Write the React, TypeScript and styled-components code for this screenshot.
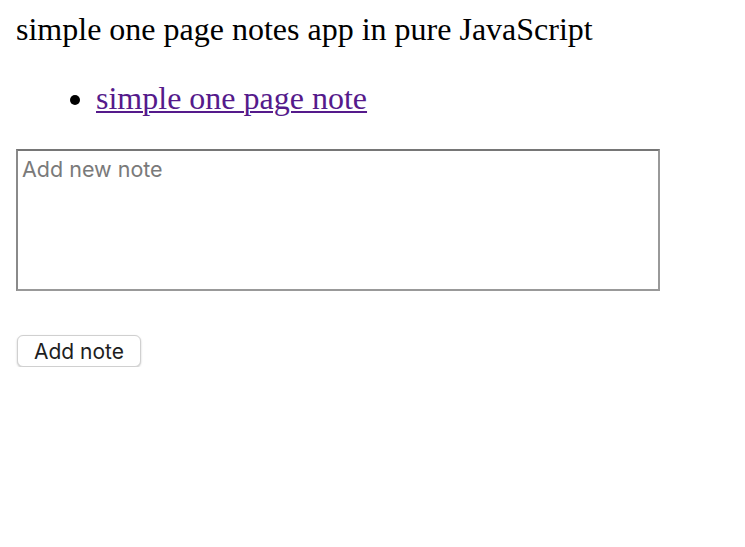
import React from "react";
import styled, { createGlobalStyle } from "styled-components";

const Global = createGlobalStyle`
  html, body { margin: 0; padding: 0; background: #ffffff; }
  body { font-family: "Liberation Serif", "Times New Roman", serif; color: #000; }
`;

const Page = styled.div`
  display: flex;
  flex-direction: column;
  align-items: flex-start;
  padding: 11px 16px 0 16px;
`;

const Title = styled.div`
  font-size: 32px;
  line-height: 36px;
`;

const NoteList = styled.ul`
  margin: 33px 0 33px 0;
  padding-left: 80px;
  font-size: 32px;
  line-height: 36px;
  list-style: disc;
`;

const NoteLink = styled.a`
  color: #551a8b;
  text-decoration: underline;
  text-underline-offset: 2px;
  text-decoration-thickness: 2px;
`;

const NoteInput = styled.textarea`
  display: block;
  box-sizing: border-box;
  width: 644px;
  height: 142px;
  margin: 0 0 44px 0;
  padding: 6px 4px;
  border-width: 2px;
  border-style: solid;
  border-color: #767676 #999999 #999999 #8a8a8a;
  font-family: "Inter", "Liberation Sans", sans-serif;
  font-size: 21.5px;
  line-height: 1.2;
  resize: none;
  outline: none;
  &::placeholder { color: #7a7a7a; }
`;

const AddButton = styled.button`
  box-sizing: border-box;
  margin: 0 0 0 1px;
  width: 124px;
  height: 32px;
  padding: 0;
  border: 1px solid #d0d0d0;
  border-radius: 6px;
  background: #ffffff;
  box-shadow: 0 1px 2px rgba(0, 0, 0, 0.22);
  font-family: "Inter", "Liberation Sans", sans-serif;
  font-size: 21px;
  color: #1e1e1e;
  display: flex;
  align-items: center;
  justify-content: center;
  cursor: pointer;
`;

export default function App() {
  return (
    <>
      <Global />
      <Page>
        <Title>simple one page notes app in pure JavaScript</Title>
        <NoteList>
          <li>
            <NoteLink href="#">simple one page note</NoteLink>
          </li>
        </NoteList>
        <NoteInput placeholder="Add new note" />
        <AddButton>Add note</AddButton>
      </Page>
    </>
  );
}
